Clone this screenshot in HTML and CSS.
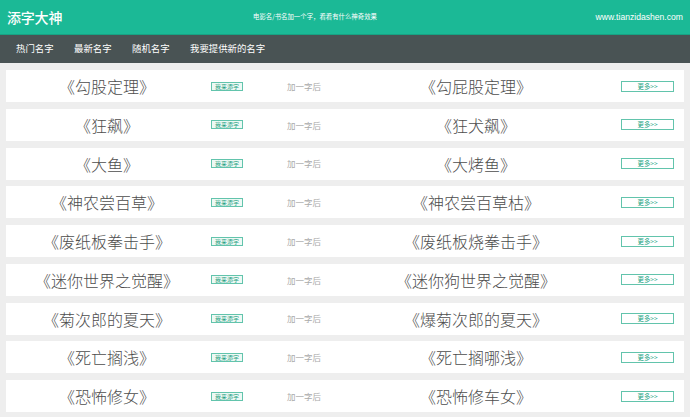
FILE: index.html
```html
<!DOCTYPE html>
<html lang="zh-CN">
<head>
<meta charset="utf-8">
<title>添字大神</title>
<link rel="stylesheet" href="styles.css">
</head>
<body>
<header class="top">
  <h1 class="logo">添字大神</h1>
  <p class="slogan">电影名/书名加一个字，看看有什么神奇效果</p>
  <span class="site">www.tianzidashen.com</span>
</header>
<nav class="nav">
  <a class="nav-item">热门名字</a>
  <a class="nav-item">最新名字</a>
  <a class="nav-item">随机名字</a>
  <a class="nav-item">我要提供新的名字</a>
</nav>
<main class="list">
  <div class="row"><div class="name">《勾股定理》</div><div class="cell-add"><span class="add-btn">我来添字</span></div><div class="after">加一字后</div><div class="name">《勾屁股定理》</div><div class="cell-more"><span class="more-btn">更多&gt;&gt;</span></div></div>
  <div class="row"><div class="name">《狂飙》</div><div class="cell-add"><span class="add-btn">我来添字</span></div><div class="after">加一字后</div><div class="name">《狂犬飙》</div><div class="cell-more"><span class="more-btn">更多&gt;&gt;</span></div></div>
  <div class="row"><div class="name">《大鱼》</div><div class="cell-add"><span class="add-btn">我来添字</span></div><div class="after">加一字后</div><div class="name">《大烤鱼》</div><div class="cell-more"><span class="more-btn">更多&gt;&gt;</span></div></div>
  <div class="row"><div class="name">《神农尝百草》</div><div class="cell-add"><span class="add-btn">我来添字</span></div><div class="after">加一字后</div><div class="name">《神农尝百草枯》</div><div class="cell-more"><span class="more-btn">更多&gt;&gt;</span></div></div>
  <div class="row"><div class="name">《废纸板拳击手》</div><div class="cell-add"><span class="add-btn">我来添字</span></div><div class="after">加一字后</div><div class="name">《废纸板烧拳击手》</div><div class="cell-more"><span class="more-btn">更多&gt;&gt;</span></div></div>
  <div class="row"><div class="name">《迷你世界之觉醒》</div><div class="cell-add"><span class="add-btn">我来添字</span></div><div class="after">加一字后</div><div class="name">《迷你狗世界之觉醒》</div><div class="cell-more"><span class="more-btn">更多&gt;&gt;</span></div></div>
  <div class="row"><div class="name">《菊次郎的夏天》</div><div class="cell-add"><span class="add-btn">我来添字</span></div><div class="after">加一字后</div><div class="name">《爆菊次郎的夏天》</div><div class="cell-more"><span class="more-btn">更多&gt;&gt;</span></div></div>
  <div class="row"><div class="name">《死亡搁浅》</div><div class="cell-add"><span class="add-btn">我来添字</span></div><div class="after">加一字后</div><div class="name">《死亡搁哪浅》</div><div class="cell-more"><span class="more-btn">更多&gt;&gt;</span></div></div>
  <div class="row"><div class="name">《恐怖修女》</div><div class="cell-add"><span class="add-btn">我来添字</span></div><div class="after">加一字后</div><div class="name">《恐怖修车女》</div><div class="cell-more"><span class="more-btn">更多&gt;&gt;</span></div></div>
</main>
</body>
</html>
```
FILE: styles.css
```css
* { box-sizing: border-box; }
html, body { margin: 0; padding: 0; }
body {
  background: #eeeeee;
  font-family: "Noto Sans CJK SC", "Noto Sans", sans-serif;
  overflow: hidden;
}
.top {
  height: 35px;
  background: #1bb996;
  border-bottom: 1px solid #17a283;
  display: flex;
  align-items: center;
  padding: 0 7px;
  color: #fff;
}
.logo {
  margin: 0;
  width: 246px;
  font-size: 14px;
  font-weight: 500;
  line-height: 1;
  letter-spacing: -0.2px;
}
.slogan {
  margin: 0;
  font-size: 6.4px;
  line-height: 1;
}
.site {
  margin-left: auto;
  font-family: "Liberation Sans", sans-serif;
  font-size: 8.6px;
  line-height: 1;
}
.nav {
  height: 28px;
  background: #495354;
  display: flex;
  align-items: center;
  padding-left: 16px;
  gap: 20.5px;
}
.nav-item {
  color: #fff;
  font-size: 9.4px;
  line-height: 1;
}
.list {
  padding: 7px 6px 0 6px;
  display: flex;
  flex-direction: column;
  gap: 6.75px;
}
.row {
  height: 32px;
  background: #fff;
  display: grid;
  grid-template-columns: 202px 79px 89px 200px 1fr;
  align-items: center;
}
.name {
  text-align: center;
  font-size: 16px;
  font-weight: 300;
  color: #4d4d4d;
  line-height: 1;
  white-space: nowrap;
}
.cell-add { padding-left: 3px; display: flex; }
.add-btn {
  display: inline-block;
  height: 9px;
  padding: 0 3px;
  border: 1px solid #62c4ac;
  background: #eef9f5;
  color: #1d9e80;
  font-size: 6px;
  line-height: 7px;
}
.after {
  font-size: 8.5px;
  color: #aaa;
  line-height: 1;
}
.cell-more { padding-left: 45px; display: flex; }
.more-btn {
  display: inline-block;
  width: 53px;
  height: 11px;
  border: 1px solid #62c4ac;
  background: #fff;
  color: #22a484;
  font-size: 6.4px;
  line-height: 9px;
  text-align: center;
}
```
